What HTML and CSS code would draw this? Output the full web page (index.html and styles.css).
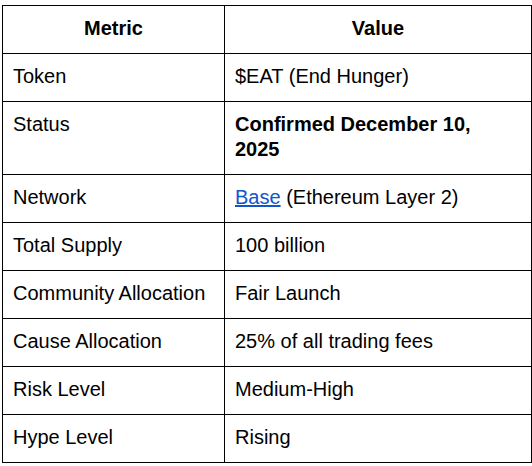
FILE: index.html
```html
<!DOCTYPE html>
<html>
<head>
<meta charset="utf-8">
<link rel="stylesheet" href="styles.css">
</head>
<body>
<table class="metrics">
  <colgroup><col class="c1"><col class="c2"></colgroup>
  <thead>
    <tr><th>Metric</th><th>Value</th></tr>
  </thead>
  <tbody>
    <tr><td>Token</td><td>$EAT (End Hunger)</td></tr>
    <tr><td>Status</td><td><strong>Confirmed December 10, 2025</strong></td></tr>
    <tr><td>Network</td><td><a href="#" class="link">Base</a> (Ethereum Layer 2)</td></tr>
    <tr><td>Total Supply</td><td>100 billion</td></tr>
    <tr><td>Community Allocation</td><td>Fair Launch</td></tr>
    <tr><td>Cause Allocation</td><td>25% of all trading fees</td></tr>
    <tr><td>Risk Level</td><td>Medium-High</td></tr>
    <tr><td>Hype Level</td><td>Rising</td></tr>
  </tbody>
</table>
</body>
</html>
```
FILE: styles.css
```css
html, body {
  margin: 0;
  padding: 0;
  background: #ffffff;
}
body {
  font-family: "Liberation Sans", Arial, sans-serif;
  color: #000000;
}
.metrics {
  border-collapse: collapse;
  table-layout: fixed;
  width: 529px;
  margin: 5px 0 0 2px;
  font-size: 20px;
  line-height: 25px;
}
.c1 { width: 222px; }
.c2 { width: 307px; }
.metrics th,
.metrics td {
  border: 1px solid #000000;
  padding: 10px 18px 12px 10px;
  text-align: left;
  vertical-align: top;
}
.metrics th {
  text-align: center;
  padding-right: 10px;
  font-weight: bold;
}
.link {
  color: #1155cc;
  text-decoration: underline;
}
```
